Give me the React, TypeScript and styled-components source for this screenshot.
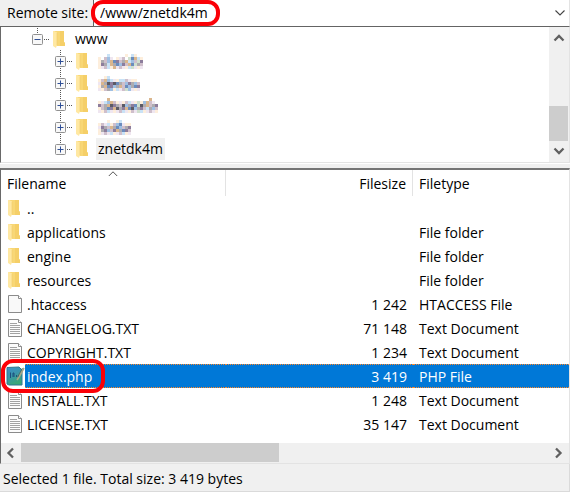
import React from "react";
import styled, { createGlobalStyle, css } from "styled-components";

const GlobalStyle = createGlobalStyle`
  * { box-sizing: border-box; }
  body { margin: 0; background: #fff; }
  button, input { font: inherit; color: inherit; }
`;

const Window = styled.main`
  display: flex;
  flex-direction: column;
  padding-right: 1px;
  background: #fff;
  color: #000;
  font: 14px/20px "Open Sans", "Noto Sans", sans-serif;
`;

const AddressBar = styled.div`
  display: flex;
  height: 27px;
  background: #f0f0f0;
  border-bottom: 1px solid #646464;
  border-right: 1px solid #e3e3e3;
`;

const AddressLabel = styled.label`
  width: 93px;
  padding: 3px 0 0 7px;
  white-space: nowrap;
`;

const AddressField = styled.div`
  position: relative;
  display: flex;
  flex: 1;
  background: #fff;
  border-left: 1px solid #646464;
`;

const AddressInput = styled.input`
  flex: 1;
  min-width: 0;
  padding: 0 6px;
  border: 0;
  outline: 0;
  background: transparent;
`;

const PlainButton = styled.button`
  display: flex;
  flex: none;
  align-items: center;
  justify-content: center;
  width: 20px;
  height: 20px;
  padding: 0;
  border: 0;
  background: transparent;
`;

const DropButton = styled(PlainButton)`
  width: 18px;
  height: 26px;
`;

const Ring = styled.span<{ $place: "address" | "file" }>`
  position: absolute;
  z-index: 1;
  border: 4px solid #fb0007;
  border-radius: 12px;
  pointer-events: none;
  ${(p) =>
    p.$place === "address"
      ? css`top: 0; left: -3px; width: 129px; height: 26px;`
      : css`top: -5px; left: 0; width: 104px; height: 34px;`}
`;

const TreePane = styled.section`
  display: flex;
  border: solid #e3e3e3;
  border-width: 0 1px 1px 0;
  border-left: 1px solid #696969;
`;

const TreeList = styled.ul`
  flex: 1;
  margin: 0;
  padding: 1px 0 2px;
  list-style: none;
`;

const TreeRow = styled.li<{ $level: number }>`
  display: flex;
  align-items: center;
  height: 22px;
  padding-left: ${(p) => 6 + p.$level * 23}px;
`;

const Expander = styled(PlainButton)`
  width: 20px;
  height: 22px;
`;

const FolderGap = styled.i`
  display: flex;
  margin-left: 3px;
`;

const TreeName = styled.span<{ $selected?: boolean }>`
  display: flex;
  align-items: center;
  height: 22px;
  margin-left: 8px;
  padding: 0 2px;
  background: ${(p) => (p.$selected ? "#f0f0f0" : "transparent")};
`;

const VerticalScroll = styled.div`
  display: flex;
  flex-direction: column;
  width: 20px;
  padding: 1px 0;
  background: #f0f0f0;
`;

const VerticalThumb = styled.div`
  height: 35px;
  margin: auto 1px 0 0;
  background: #cdcdcd;
`;

const Splitter = styled.div`
  height: 5px;
  background: #f0f0f0;
  border-top: 1px solid #fff;
`;

const ListPane = styled.section`
  border: solid #e3e3e3;
  border-width: 2px 1px 1px 1px;
  border-top-color: #757575;
  border-left-color: #696969;
`;

const FileTable = styled.table`
  width: 100%;
  margin-bottom: 7px;
  border-collapse: separate;
  border-spacing: 0;
  table-layout: fixed;
`;

const Column = styled.col<{ $width?: number }>`
  width: ${(p) => (p.$width ? `${p.$width}px` : "auto")};
`;

const HeadCell = styled.th<{ $numeric?: boolean; $last?: boolean }>`
  position: relative;
  height: 26px;
  padding: 2px 6px 0;
  border-right: ${(p) => (p.$last ? 0 : 1)}px solid #e3e3e3;
  font-weight: 400;
  text-align: ${(p) => (p.$numeric ? "right" : "left")};
`;

const SortMark = styled.svg`
  position: absolute;
  top: 1px;
  left: calc(50% - 5px);
`;

const Cell = styled.td<{ $numeric?: boolean }>`
  position: relative;
  height: 24px;
  padding: 1px 6px 0;
  border: 0 dotted transparent;
  border-width: 1px 0;
  line-height: 21px;
  text-align: ${(p) => (p.$numeric ? "right" : "left")};
  white-space: nowrap;
`;

const NameCell = styled(Cell)`
  padding: 0;
  border: 0;
`;

const NameBox = styled.div`
  display: flex;
  align-items: center;
`;

const IconSlot = styled.i<{ $wide?: boolean }>`
  display: flex;
  width: 24px;
  padding-left: ${(p) => (p.$wide ? 5 : 7)}px;
`;

const FileName = styled.span`
  flex: 1;
  height: 24px;
  padding: 1px 0 0 2px;
  border: 0 dotted transparent;
  border-width: 1px 0;
`;

const FileRow = styled.tr<{ $selected?: boolean }>`
  height: 24px;
  ${(p) =>
    p.$selected &&
    css`
      color: #fff;
      td:not(:first-child), ${FileName} {
        background: #0078d7;
        border-color: #ff8728;
      }
    `}
`;

const HorizontalScroll = styled.div`
  display: flex;
  height: 20px;
  padding-right: 1px;
  background: #f0f0f0;
`;

const HorizontalTrack = styled.div`
  flex: 1;
  height: 19px;
`;

const HorizontalThumb = styled.div`
  width: 49%;
  height: 19px;
  background: #cdcdcd;
`;

const StatusBar = styled.footer`
  height: 28px;
  padding: 5px 3px 2px;
  background: #f0f0f0;
  border: solid #dadada;
  border-width: 0 1px 1px 0;
`;

type Direction = "up" | "down" | "left" | "right";
const chevrons: Record<Direction, string> = {
  up: "M1.5 8.5 6 4 10.5 8.5",
  down: "M1.5 3.5 6 8 10.5 3.5",
  left: "M8 1.5 3.5 6 8 10.5",
  right: "M4 1.5 8.5 6 4 10.5",
};

const Chevron = ({ to, thin }: { to: Direction; thin?: boolean }) => (
  <svg width="12" height="12" viewBox="0 0 12 12" fill="none" stroke={thin ? "#444" : "#606060"} strokeWidth={thin ? 1.1 : 2.3}>
    <path d={chevrons[to]} />
  </svg>
);

const FolderIcon = () => (
  <svg width="12" height="18" viewBox="0 0 12 18">
    <path d="M1 1h10v11l1 1v3H3z" fill="#f8d775" />
    <path d="M7 1h4v11l1 1v3H7z" fill="#f5cf68" />
    <path d="M0 1h1l3 1.5V15l-1 3-3-2z" fill="#ffe8a2" />
    <path d="M4 3v12" stroke="#f0cb6c" strokeWidth=".6" />
  </svg>
);

const PageIcon = ({ lines }: { lines?: boolean }) => (
  <svg width="15" height="18" viewBox="0 0 15 18">
    <path d="M.5.5h10l3 3v14H.5z" fill={lines ? "#fcfcfc" : "#f9f9f9"} stroke="#8b8b8b" />
    <path d="M10.5.5v3h3" fill="#fff" stroke="#8b8b8b" />
    {lines && <path d="M2 4.5h7M2 6.5h10M2 8.5h10M2 10.5h10M2 12.5h10M2 14.5h10" stroke="#a2a2a2" />}
  </svg>
);

const PhpIcon = () => (
  <svg width="19" height="20" viewBox="0 0 19 20">
    <defs>
      <linearGradient id="php-page" x1="0" y1="0" x2="0.4" y2="1">
        <stop offset="0" stopColor="#3c8fc8" />
        <stop offset="0.5" stopColor="#3b95ac" />
        <stop offset="1" stopColor="#3aa878" />
      </linearGradient>
    </defs>
    <path d="M1 1.5 13 1l3 3v15H3L1 18z" fill="url(#php-page)" stroke="#2f7892" />
    <path d="M4.5 12V6.5M7 11V7h1v4M10.5 9v2M12.5 9v2" fill="none" stroke="#1d4f7c" />
    <path d="m18 2-5 9-2 3" fill="none" stroke="#a9a583" strokeWidth="1.6" />
    <path d="m16.5 2-5 9" stroke="#4f6a64" strokeWidth=".8" />
  </svg>
);

const ExpandIcon = ({ open, last }: { open?: boolean; last?: boolean }) => (
  <svg width="20" height="22" viewBox="0 0 20 22" fill="none">
    <path d={`M7.5 0v6${open || last ? "" : "M7.5 18v4"}M14 11.5h6`} stroke="#555" strokeDasharray="1 1" />
    <rect x="2.5" y="6.5" width="10" height="10" rx="1" fill="#f8f8f8" stroke="#919191" />
    <path d={`M4.5 11.5h6${open ? "" : "M7.5 8.5v6"}`} stroke="#2f4f96" />
  </svg>
);

const palette: Record<string, string> = {
  a: "#fdeedc", b: "#9fbfe2", c: "#cfbfcb", d: "#8d7d9c", e: "#dab68d", f: "#5c5a64",
  g: "#c9e2f6", h: "#cfe0cd", i: "#6b8cbd", j: "#adabb0", k: "#efe6f0",
};

const mosaics = {
  first: ["...g.....a.ga..", "a.cbk.akc.hiega", "ajcbeidcjegbchd", "adjgejibdceihjc", "akcgaekckaghkak"],
  second: ["..ag..........", "acebgkaggckaa.", "kejfdfijcbdjbc", "ajeidbjecibjid", "kacjbagkchbkak"],
  third: ["...e.............e..", "akgbecakacgkahabeck.", "dcjefdjcfbjdihfjecjd", "acjidefjdeifbjdcgjbc", "kacgkakcgkackhgakcka"],
  fourth: ["...a..ag...", "ackgacbikaa", "kdjcejibcjd", "ajdbcdejidc", "akckgakcgak"],
};

const Mosaic = ({ rows }: { rows: string[] }) => (
  <svg width={rows[0].length * 3} height="15" shapeRendering="crispEdges" role="img" aria-label="Hidden folder name">
    {rows.flatMap((row, y) =>
      [...row].map((key, x) =>
        palette[key] ? <rect key={`${x}-${y}`} x={x * 3} y={y * 3} width="3" height="3" fill={palette[key]} /> : null
      )
    )}
  </svg>
);

const tree: { level: number; name?: string; hidden?: string[]; open?: boolean; selected?: boolean }[] = [
  { level: 1, name: "www", open: true },
  { level: 2, hidden: mosaics.first },
  { level: 2, hidden: mosaics.second },
  { level: 2, hidden: mosaics.third },
  { level: 2, hidden: mosaics.fourth },
  { level: 2, name: "znetdk4m", selected: true },
];

type Kind = "folder" | "page" | "text" | "php";
const files: { name: string; kind: Kind; size?: string; type?: string; selected?: boolean }[] = [
  { name: "..", kind: "folder" },
  { name: "applications", kind: "folder", type: "File folder" },
  { name: "engine", kind: "folder", type: "File folder" },
  { name: "resources", kind: "folder", type: "File folder" },
  { name: ".htaccess", kind: "page", size: "1 242", type: "HTACCESS File" },
  { name: "CHANGELOG.TXT", kind: "text", size: "71 148", type: "Text Document" },
  { name: "COPYRIGHT.TXT", kind: "text", size: "1 234", type: "Text Document" },
  { name: "index.php", kind: "php", size: "3 419", type: "PHP File", selected: true },
  { name: "INSTALL.TXT", kind: "text", size: "1 248", type: "Text Document" },
  { name: "LICENSE.TXT", kind: "text", size: "35 147", type: "Text Document" },
];

const icons: Record<Kind, React.ReactNode> = {
  folder: <FolderIcon />,
  page: <PageIcon />,
  text: <PageIcon lines />,
  php: <PhpIcon />,
};

export default function App() {
  return (
    <Window>
      <GlobalStyle />
      <AddressBar>
        <AddressLabel htmlFor="remote-site">Remote site:</AddressLabel>
        <AddressField>
          <AddressInput id="remote-site" defaultValue="/www/znetdk4m" spellCheck={false} />
          <DropButton type="button" aria-label="Show recent paths"><Chevron to="down" thin /></DropButton>
          <Ring $place="address" />
        </AddressField>
      </AddressBar>

      <TreePane aria-label="Remote folders">
        <TreeList>
          {tree.map((node, i) => (
            <TreeRow key={i} $level={node.level}>
              <Expander type="button" aria-label={node.open ? "Collapse" : "Expand"}>
                <ExpandIcon open={node.open} last={i === tree.length - 1} />
              </Expander>
              <FolderGap><FolderIcon /></FolderGap>
              <TreeName $selected={node.selected}>{node.hidden ? <Mosaic rows={node.hidden} /> : node.name}</TreeName>
            </TreeRow>
          ))}
        </TreeList>
        <VerticalScroll>
          <PlainButton type="button" aria-label="Scroll up"><Chevron to="up" /></PlainButton>
          <VerticalThumb />
          <PlainButton type="button" aria-label="Scroll down"><Chevron to="down" /></PlainButton>
        </VerticalScroll>
      </TreePane>

      <Splitter />

      <ListPane aria-label="Remote files">
        <FileTable>
          <colgroup><Column $width={225} /><Column $width={187} /><Column /></colgroup>
          <thead>
            <tr>
              <HeadCell scope="col" aria-sort="ascending">
                Filename
                <SortMark width="10" height="6" viewBox="0 0 10 6" fill="none" stroke="#555"><path d="M.8 5 5 .8 9.2 5" /></SortMark>
              </HeadCell>
              <HeadCell scope="col" $numeric>Filesize</HeadCell>
              <HeadCell scope="col" $last>Filetype</HeadCell>
            </tr>
          </thead>
          <tbody>
            {files.map((file) => (
              <FileRow key={file.name} $selected={file.selected}>
                <NameCell>
                  <NameBox>
                    <IconSlot $wide={file.kind === "php"}>{icons[file.kind]}</IconSlot>
                    <FileName>{file.name}</FileName>
                  </NameBox>
                  {file.selected && <Ring $place="file" />}
                </NameCell>
                <Cell $numeric>{file.size}</Cell>
                <Cell>{file.type}</Cell>
              </FileRow>
            ))}
          </tbody>
        </FileTable>
        <HorizontalScroll>
          <PlainButton type="button" aria-label="Scroll left"><Chevron to="left" /></PlainButton>
          <HorizontalTrack><HorizontalThumb /></HorizontalTrack>
          <PlainButton type="button" aria-label="Scroll right"><Chevron to="right" /></PlainButton>
        </HorizontalScroll>
      </ListPane>
      <StatusBar>Selected 1 file. Total size: 3 419 bytes</StatusBar>
    </Window>
  );
}
